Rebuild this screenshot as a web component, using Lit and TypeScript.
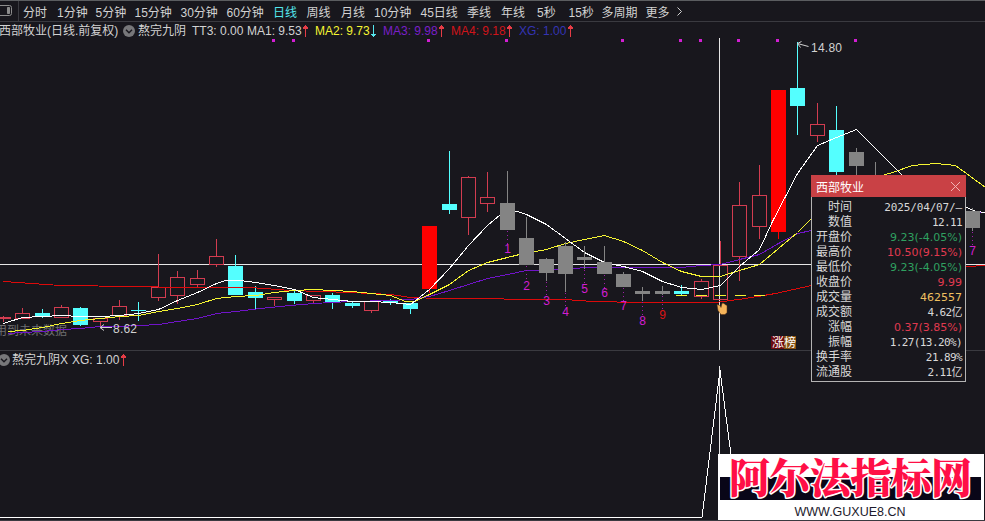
import { LitElement, html, svg, css } from 'lit';
import { customElement, property } from 'lit/decorators.js';
import { classMap } from 'lit/directives/class-map.js';

type Kind = 'up' | 'down' | 'limit' | 'mark';
// center x, high, body top, body bottom, low, kind
type Candle = [number, number, number, number, number, Kind];

const PERIODS = [
  '分时', '1分钟', '5分钟', '15分钟', '30分钟', '60分钟', '日线', '周线', '月线',
  '10分钟', '45日线', '季线', '年线', '5秒', '15秒', '多周期', '更多',
];

const CANDLES: Candle[] = [
  [3, 316, 317, 319, 322, 'up'],
  [22, 308, 313, 319, 319, 'up'],
  [42, 309, 313, 317, 318, 'down'],
  [61, 305, 307, 318, 318, 'up'],
  [80, 307, 308, 325, 326, 'down'],
  [100, 318, 318, 322, 327, 'up'],
  [119, 300, 306, 316, 320, 'up'],
  [138, 302, 310, 311, 321, 'down'],
  [158, 254, 287, 298, 301, 'up'],
  [177, 271, 277, 296, 304, 'up'],
  [197, 270, 278, 285, 287, 'up'],
  [216, 239, 256, 265, 267, 'up'],
  [235, 255, 266, 295, 295, 'down'],
  [255, 286, 292, 298, 309, 'down'],
  [274, 297, 297, 300, 306, 'up'],
  [294, 291, 293, 301, 304, 'down'],
  [313, 295, 295, 301, 303, 'up'],
  [332, 293, 295, 302, 309, 'down'],
  [352, 302, 303, 306, 308, 'down'],
  [371, 301, 301, 311, 313, 'up'],
  [390, 299, 301, 303, 305, 'down'],
  [410, 303, 303, 309, 314, 'down'],
  [429, 226, 226, 289, 293, 'limit'],
  [449, 151, 204, 210, 214, 'down'],
  [468, 176, 177, 218, 235, 'up'],
  [487, 172, 197, 204, 212, 'up'],
  [507, 171, 203, 230, 230, 'mark'],
  [526, 217, 238, 265, 265, 'mark'],
  [546, 258, 259, 273, 281, 'mark'],
  [565, 242, 246, 274, 292, 'mark'],
  [584, 246, 257, 260, 269, 'mark'],
  [604, 246, 262, 274, 274, 'mark'],
  [623, 272, 274, 287, 287, 'mark'],
  [642, 287, 291, 294, 301, 'mark'],
  [662, 286, 291, 294, 295, 'mark'],
  [681, 285, 291, 294, 296, 'down'],
  [701, 279, 281, 297, 299, 'up'],
  [720, 241, 265, 300, 300, 'up'],
  [739, 182, 205, 257, 281, 'up'],
  [759, 165, 195, 227, 239, 'up'],
  [778, 90, 90, 232, 239, 'limit'],
  [797, 42, 88, 106, 135, 'down'],
  [817, 103, 124, 136, 142, 'up'],
  [836, 106, 130, 172, 180, 'down'],
  [856, 148, 152, 166, 180, 'mark'],
  [875, 162, 180, 190, 195, 'mark'],
  [972, 208, 211, 228, 231, 'mark'],
  [992, 220, 227, 243, 243, 'mark'],
];

const MA_LINES = [
  {
    name: 'ma4',
    points: '3,281 60,285 135,286 180,287 250,287 290,290 350,292 390,294 410,297 440,298 565,299 592,301 640,302 715,302 745,298 775,293 811,285 900,270 966,266 985,265',
  },
  {
    name: 'ma3',
    points: '8,333 22,332 42,331 61,329 80,328 100,326 119,326 158,324 177,321 197,318 216,313 235,311 260,308 290,305 313,303 350,301 390,300 410,299 429,296 449,290 468,284 487,278 507,274 526,270 565,269 584,267 623,267 680,267 701,265 720,264 739,259 759,254 778,243 797,233 811,230 900,215 966,212 985,212',
  },
  {
    name: 'ma2',
    points: '8,331 22,330 42,327 61,323 80,320 100,318 119,316 138,315 158,311 177,308 197,304 216,298 235,296 255,295 274,292 294,290 313,289 332,290 352,291 371,293 390,295 405,301 414,301 429,294 449,284 468,270 487,262 507,257 519,254 546,249 565,243 584,239 604,235 623,241 642,250 662,262 681,271 701,276 720,276 739,270 759,264 778,248 797,232 811,218 850,190 882,175 895,171 912,165 935,163 955,165 985,187',
  },
  {
    name: 'ma1',
    points: '3,323 22,317 42,316 61,315 80,316 100,316 119,315 138,313 158,309 177,300 197,292 216,283 225,280 240,280 255,282 274,285 294,289 313,297 332,299 352,301 371,301 390,302 410,304 429,289 449,268 468,245 487,225 500,214 507,208 526,214 546,224 565,238 584,252 604,262 623,266 642,271 662,281 681,287 701,289 720,285 739,266 759,249 772,221 797,173 817,145 836,137 856,129 875,148 901,174 930,195 966,207 976,211 985,212',
  },
];

// digit, x, baseline y, top of the dotted leader
const COUNTS: [string, number, number, number][] = [
  ['1', 507, 253, 231],
  ['2', 526, 290, 266],
  ['3', 546, 305, 282],
  ['4', 565, 316, 293],
  ['5', 584, 293, 270],
  ['6', 604, 297, 275],
  ['7', 623, 310, 288],
  ['8', 642, 325, 302],
  ['9', 662, 319, 296],
  ['7', 972, 255, 232],
];

const SIGNALS = [273, 293, 428, 506, 622, 680, 700, 738, 777, 855];

const QUOTE: [string, string, string][] = [
  ['时间', '2025/04/07/—', 'plain date'],
  ['数值', '12.11', 'plain'],
  ['开盘价', '9.23(-4.05%)', 'green'],
  ['最高价', '10.50(9.15%)', 'red'],
  ['最低价', '9.23(-4.05%)', 'green'],
  ['收盘价', '9.99', 'red'],
  ['成交量', '462557', 'gold'],
  ['成交额', '4.62亿', 'plain'],
  ['涨幅', '0.37(3.85%)', 'red'],
  ['振幅', '1.27(13.20%)', 'plain'],
  ['换手率', '21.89%', 'plain'],
  ['流通股', '2.11亿', 'plain'],
];

const arrow = (down = false) => html`
  <svg class="arrow ${down ? 'fall' : 'rise'}" width="7" height="14" viewBox="0 0 7 14">
    ${down
      ? svg`<path d="M3 1h1v12h-1zM1 10h5v1h-1v1h-3v-1h-1z" />`
      : svg`<path d="M3 1h1v12h-1zM2 2h3v1h1v2h-5v-2h1z" />`}
  </svg>
`;

const chevron = html`
  <svg class="chevron" width="12" height="12" viewBox="0 0 12 12">
    <circle cx="6" cy="6" r="6" />
    <path d="M3 4.8l3 3 3-3" />
  </svg>
`;

@customElement('period-bar')
export class PeriodBar extends LitElement {
  @property({ type: String }) active = '日线';

  static styles = css`
    :host {
      display: grid;
      grid-template-columns:
        23px 34px 38.5px 39px 46px 46px 46.5px 33.5px 34.5px 33px 46.5px
        46.5px 34px 36px 31.5px 33px 44px 30px 1fr;
      align-items: center;
      height: 22px;
      box-sizing: border-box;
      border-top: 1px solid #5b5d60;
      border-bottom: 1px solid #3a3a40;
      font-size: 12px;
      color: #d2d2d2;
      white-space: nowrap;
    }

    .active {
      color: #54e6ee;
    }

    svg {
      display: block;
      fill: none;
      stroke: #8c8c8c;
    }
  `;

  render() {
    return html`
      <svg width="20" height="20" viewBox="0 0 20 20">
        <path d="M0 4.5h9.5q2 0 2 2v6q0 2-2 2h-9.5" />
        <path d="M7.5 6.5h2v6h-2z" fill="#8c8c8c" />
        <path d="M18.500 0v20" stroke="#3a3a40" />
      </svg>
      ${PERIODS.map(
        (p) => html`<span class=${classMap({ active: p === this.active })}>${p}</span>`
      )}
      <svg width="8" height="11" viewBox="0 0 8 11">
        <path d="M1.500 1.500l4 4-4 4" stroke="#d2d2d2" />
      </svg>
    `;
  }
}

@customElement('quote-card')
export class QuoteCard extends LitElement {
  static styles = css`
    :host {
      display: block;
      width: 155px;
      height: 207px;
      box-sizing: border-box;
      background: #18171d;
      border: 1px solid #b4b4b4;
      border-top: 0;
      font-size: 12px;
      color: #d8d8d8;
    }

    .title {
      display: flex;
      justify-content: space-between;
      align-items: center;
      height: 22px;
      margin: 0 -1px;
      padding: 0 5px;
      background: #c94145;
      color: #fff;
    }

    .rows {
      padding: 3px 3px 0 4px;
    }

    .row {
      display: grid;
      grid-template-columns: 36px 1fr;
      align-items: center;
      height: 15px;
      line-height: 15px;
      text-align: right;
      white-space: nowrap;
    }

    .plain {
      font-family: 'DejaVu Sans Mono', 'Noto Sans CJK SC', monospace;
      font-size: 11px;
      letter-spacing: -0.6px;
    }

    .date {
      letter-spacing: -0.15px;
    }

    .green,
    .red,
    .gold {
      font-family: 'DejaVu Sans', sans-serif;
      font-size: 11px;
    }

    .green {
      color: #2fa060;
    }

    .red {
      color: #e03a50;
    }

    .gold {
      color: #f0c060;
    }
  `;

  render() {
    return html`
      <div class="title">
        <span>西部牧业</span>
        <svg width="11" height="11" viewBox="0 0 11 11">
          <path d="M1 1l9 9M10 1l-9 9" stroke="#f0b4b4" />
        </svg>
      </div>
      <div class="rows">
        ${QUOTE.map(
          ([label, value, tone]) => html`
            <div class="row"><span>${label}</span><span class=${tone}>${value}</span></div>
          `
        )}
      </div>
    `;
  }
}

@customElement('site-banner')
export class SiteBanner extends LitElement {
  static styles = css`
    :host {
      display: flex;
      flex-direction: column;
      width: 266px;
      height: 66px;
      background: #fff;
    }

    .name {
      height: 46px;
      margin: 0 3px 0 2px;
      background: linear-gradient(#fff 23px, #090618 23px);
      text-align: center;
    }

    .name svg {
      display: block;
      overflow: visible;
    }

    text {
      font-family: 'Noto Serif CJK SC', 'Noto Sans CJK SC', sans-serif;
      font-weight: 900;
      font-size: 41px;
      fill: #ff0f46;
      stroke: #fff;
      stroke-width: 3px;
      stroke-linejoin: round;
      paint-order: stroke;
    }

    .url {
      padding-top: 5px;
      padding-right: 2px;
      font-size: 12.5px;
      line-height: 14px;
      text-align: center;
      color: #1c1a2c;
    }
  `;

  render() {
    return html`
      <div class="name">
        <svg width="261" height="46">
          <text x="9" y="39" textLength="243">阿尔法指标网</text>
        </svg>
      </div>
      <div class="url">WWW.GUXUE8.CN</div>
    `;
  }
}

@customElement('app-root')
export class AppRoot extends LitElement {
  static styles = css`
    :host {
      display: block;
      position: relative;
      width: 985px;
      height: 521px;
      overflow: hidden;
      background: #18171d;
      color: #d2d2d2;
      font-family: 'Liberation Sans', 'Noto Sans CJK SC', sans-serif;
      font-size: 12px;
    }

    .legend {
      display: grid;
      align-items: center;
      height: 16px;
      line-height: 16px;
      white-space: nowrap;
    }

    .legend.main {
      grid-template-columns: 124px 15px 54px 55px 55px 13px 55px 13px 55px 13px 55px 13px 48px 10px;
      margin-left: -1px;
      padding-top: 1px;
      height: 15px;
    }

    .legend.sub {
      grid-template-columns: 14px 60px 48px 10px;
      margin-left: -2px;
      padding-top: 1px;
      height: 14px;
      border-top: 1px solid #3a3a40;
    }

    .v2 {
      color: #f5f532;
    }

    .v3 {
      color: #7a1fc8;
    }

    .v4 {
      color: #d0141a;
    }

    .xg {
      color: #3434b4;
    }

    .arrow,
    .chevron,
    .chart {
      display: block;
    }

    .rise {
      fill: #e63c46;
    }

    .fall {
      fill: #54e6ee;
    }

    .chevron circle {
      fill: #77777a;
    }

    .chevron path {
      fill: none;
      stroke: #18171d;
      stroke-width: 1.4;
    }

    .shapes {
      shape-rendering: crispEdges;
    }

    .up {
      fill: none;
      stroke: #d23c50;
    }

    .down {
      fill: #54ffff;
      stroke: #54ffff;
    }

    .limit {
      fill: #ff0000;
      stroke: #ff0000;
    }

    .mark {
      fill: #848484;
      stroke: #848484;
    }

    .line {
      fill: none;
      stroke-width: 1;
    }

    .ma1 {
      stroke: #fff;
    }

    .ma2 {
      stroke: #f5f532;
    }

    .ma3 {
      stroke: #7014c8;
    }

    .ma4 {
      stroke: #dc0a0a;
    }

    .cross {
      stroke: #e6e6e6;
    }

    .leader {
      stroke: #a01eaa;
      stroke-dasharray: 1 3;
    }

    .signal {
      fill: #d21ed2;
    }

    .count {
      fill: #d21ed2;
      text-anchor: middle;
    }

    .count.last {
      fill: #dc1414;
    }

    .price {
      fill: #d2d2d2;
    }

    .note {
      fill: #6e6e70;
    }

    .tag {
      fill: #fff;
    }

    quote-card {
      position: absolute;
      left: 811px;
      top: 175px;
    }

    site-banner {
      position: absolute;
      left: 718px;
      top: 454px;
    }
  `;

  private renderCandle([x, high, top, bottom, low, kind]: Candle) {
    return svg`
      <g class=${kind}>
        <path d="M${x + 0.5} ${high}V${top}M${x + 0.5} ${bottom}V${low}" />
        <rect x=${x - 6.5} y=${top + 0.5} width="14" height=${Math.max(bottom - top - 1, 0.01)} />
      </g>
    `;
  }

  private renderMainChart() {
    return html`
      <svg class="chart" width="985" height="312" viewBox="0 38 985 312">
        <text class="note" x="-5" y="335">用到未来数据</text>
        <g class="shapes">
          <path class="cross" d="M0 264.500H985M719.500 38V350" />
          ${CANDLES.filter((c) => c[5] !== 'mark').map((c) => this.renderCandle(c))}
          ${MA_LINES.map((l) => svg`<polyline class="line ${l.name}" points=${l.points} transform="translate(0.5 0.5)" />`)}
          <path class="line ma2" d="M676 295.500H765" stroke-dasharray="11 8.500" />
          ${CANDLES.filter((c) => c[5] === 'mark').map((c) => this.renderCandle(c))}
          ${COUNTS.map(([, x, y, top]) => svg`<path class="leader" d="M${x + 0.5} ${top}V${y - 9}" />`)}
          ${SIGNALS.map((x) => svg`<rect class="signal" x=${x - 1} y="39" width="3" height="3" />`)}
        </g>
        ${COUNTS.map(
          ([n, x, y]) => svg`<text class="count ${n === '9' ? 'last' : ''}" x=${x + 0.5} y=${y}>${n}</text>`
        )}
        <path d="M100 327.500h12M104 324.500l-4 3 4 3" fill="none" stroke="#d2d2d2" />
        <text class="price" x="113" y="333" textLength="24">8.62</text>
        <path d="M797.500 43.500l11 3M801.500 41.500l-4 2 3 4" fill="none" stroke="#d2d2d2" />
        <text class="price" x="811" y="52" textLength="31">14.80</text>
        <rect x="771" y="336" width="13" height="13" fill="#6e0a0e" />
        <rect x="784" y="336" width="12" height="13" fill="#85500f" />
        <text class="tag" x="772" y="347">涨榜</text>
        <path
          d="M717 304.500l3 1 1 2 1-4q1-1 2 0l1 1 2 1v7l-2 2h-4l-3-4z"
          fill="#f5b45a"
          stroke="#5a3214"
          stroke-width="0.500"
        />
      </svg>
    `;
  }

  private renderSubChart() {
    return html`
      <svg class="chart" width="985" height="155" viewBox="0 366 985 155">
        <g class="shapes">
          <path class="cross" d="M719.500 366V455" />
          <polyline class="line ma1" points="0,517.5 702,517.5 720,370 731,455" />
          <path d="M0 520.500H985" stroke="#3a3a40" />
        </g>
      </svg>
    `;
  }

  render() {
    return html`
      <period-bar></period-bar>
      <div class="legend main">
        <span>西部牧业(日线.前复权)</span>
        ${chevron}
        <span>熬完九阴</span>
        <span>TT3: 0.00</span>
        <span>MA1: 9.53</span>
        ${arrow()}
        <span class="v2">MA2: 9.73</span>
        ${arrow(true)}
        <span class="v3">MA3: 9.98</span>
        ${arrow()}
        <span class="v4">MA4: 9.18</span>
        ${arrow()}
        <span class="xg">XG: 1.00</span>
        ${arrow()}
      </div>
      ${this.renderMainChart()}
      <div class="legend sub">
        ${chevron}
        <span>熬完九阴X</span>
        <span>XG: 1.00</span>
        ${arrow()}
      </div>
      ${this.renderSubChart()}
      <quote-card></quote-card>
      <site-banner></site-banner>
    `;
  }
}
